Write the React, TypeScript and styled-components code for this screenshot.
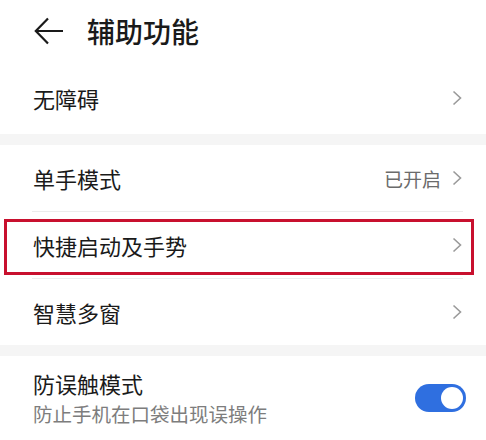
import React from "react";
import styled, { createGlobalStyle } from "styled-components";

const Global = createGlobalStyle`
  html, body { margin: 0; padding: 0; background: #ffffff; }
  body { font-family: "Noto Sans CJK SC", "Noto Sans", sans-serif; color: #1a1a1a; }
`;

const Page = styled.div`
  width: 486px;
  height: 440px;
  overflow: hidden;
  background: #f5f5f5;
  display: flex;
  flex-direction: column;
`;

const Header = styled.header`
  height: 64px;
  background: #fff;
  display: flex;
  align-items: center;
  padding-left: 34px;
  gap: 23px;
`;

const Title = styled.h1`
  margin: 0;
  font-size: 28px;
  font-weight: 500;
  line-height: 1;
  color: #1a1a1a;
`;

const Card = styled.section<{ $gapAfter?: boolean }>`
  background: #fff;
  display: flex;
  flex-direction: column;
  margin-bottom: ${(p) => (p.$gapAfter ? "11px" : "0")};
`;

const Row = styled.div<{ $h: number }>`
  position: relative;
  height: ${(p) => p.$h}px;
  display: flex;
  align-items: center;
  justify-content: space-between;
  padding: 0 24px 0 33px;
`;

const Label = styled.span`
  font-size: 22px;
  line-height: 1;
  color: #1a1a1a;
`;

const Divider = styled.div`
  height: 1px;
  margin: 0 23px 0 32px;
  background: #ececec;
`;

const Trail = styled.div`
  display: flex;
  align-items: center;
  gap: 11px;
`;

const Value = styled.span`
  font-size: 19px;
  line-height: 1;
  color: #6b6b6b;
`;

const Highlight = styled.div`
  position: absolute;
  left: 4px;
  right: 12px;
  top: 7px;
  bottom: 3px;
  border: 3px solid #c8102e;
  pointer-events: none;
`;

const TextStack = styled.div`
  display: flex;
  flex-direction: column;
  gap: 10px;
`;

const Sub = styled.span`
  font-size: 19.5px;
  line-height: 1;
  color: #7d7d7d;
`;

const Toggle = styled.div<{ $on: boolean }>`
  width: 51px;
  height: 28px;
  border-radius: 14px;
  background: ${(p) => (p.$on ? "#2f6fe0" : "#ccc")};
  display: flex;
  align-items: center;
  justify-content: ${(p) => (p.$on ? "flex-end" : "flex-start")};
  padding: 0 3px;
  box-sizing: border-box;
  margin-right: -4px;
`;

const Knob = styled.div`
  width: 22px;
  height: 22px;
  border-radius: 50%;
  background: #fff;
`;

const Chevron = () => (
  <svg width="10" height="16" viewBox="0 0 10 16" fill="none">
    <path d="M1.5 1.5 L8.5 8 L1.5 14.5" stroke="#9a9a9a" strokeWidth="1.6" strokeLinejoin="miter" />
  </svg>
);

const BackArrow = () => (
  <svg width="30" height="28" viewBox="0 0 30 28" fill="none">
    <path d="M14 1.5 L1.8 14 L14 26.5 M1.8 14 H29" stroke="#1a1a1a" strokeWidth="2.2" strokeLinecap="butt" />
  </svg>
);

export default function App() {
  return (
    <>
      <Global />
      <Page>
        <Header>
          <BackArrow />
          <Title>辅助功能</Title>
        </Header>
        <Card $gapAfter>
          <Row $h={72}>
            <Label>无障碍</Label>
            <Chevron />
          </Row>
        </Card>
        <Card $gapAfter>
          <Row $h={66}>
            <Label>单手模式</Label>
            <Trail>
              <Value>已开启</Value>
              <Chevron />
            </Trail>
          </Row>
          <Divider />
          <Row $h={66}>
            <Label>快捷启动及手势</Label>
            <Chevron />
            <Highlight />
          </Row>
          <Divider />
          <Row $h={66}>
            <Label>智慧多窗</Label>
            <Chevron />
          </Row>
        </Card>
        <Card>
          <Row $h={84}>
            <TextStack>
              <Label>防误触模式</Label>
              <Sub>防止手机在口袋出现误操作</Sub>
            </TextStack>
            <Toggle $on>
              <Knob />
            </Toggle>
          </Row>
        </Card>
      </Page>
    </>
  );
}
